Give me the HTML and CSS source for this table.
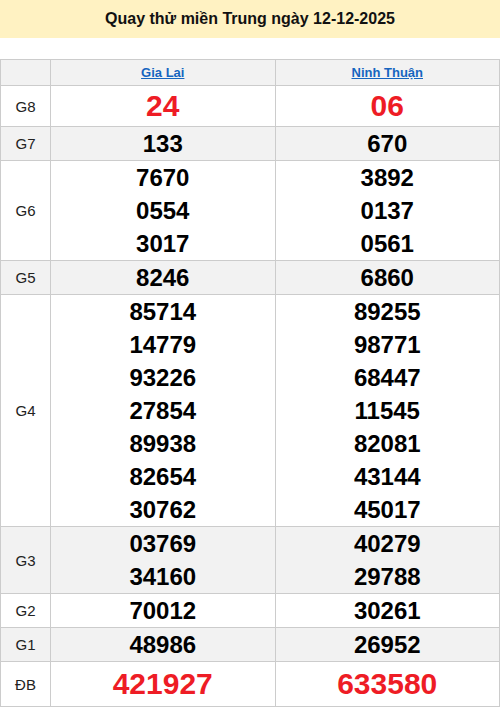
FILE: index.html
```html
<!DOCTYPE html>
<html lang="vi">
<head>
<meta charset="utf-8">
<title>Quay thử miền Trung</title>
<link rel="stylesheet" href="styles.css">
</head>
<body>
<div class="title">Quay thử miền Trung ngày 12-12-2025</div>
<table class="kq">
  <thead>
    <tr class="head">
      <th class="lbl"></th>
      <th><a href="#">Gia Lai</a></th>
      <th><a href="#">Ninh Thuận</a></th>
    </tr>
  </thead>
  <tbody>
    <tr class="g8"><td class="lbl">G8</td><td class="num big red">24</td><td class="num big red">06</td></tr>
    <tr class="alt"><td class="lbl">G7</td><td class="num">133</td><td class="num">670</td></tr>
    <tr><td class="lbl">G6</td><td class="num">7670<br>0554<br>3017</td><td class="num">3892<br>0137<br>0561</td></tr>
    <tr class="alt"><td class="lbl">G5</td><td class="num">8246</td><td class="num">6860</td></tr>
    <tr><td class="lbl">G4</td><td class="num">85714<br>14779<br>93226<br>27854<br>89938<br>82654<br>30762</td><td class="num">89255<br>98771<br>68447<br>11545<br>82081<br>43144<br>45017</td></tr>
    <tr class="alt"><td class="lbl">G3</td><td class="num">03769<br>34160</td><td class="num">40279<br>29788</td></tr>
    <tr><td class="lbl">G2</td><td class="num">70012</td><td class="num">30261</td></tr>
    <tr class="alt"><td class="lbl">G1</td><td class="num">48986</td><td class="num">26952</td></tr>
    <tr class="db"><td class="lbl">ĐB</td><td class="num big red">421927</td><td class="num big red">633580</td></tr>
  </tbody>
</table>
</body>
</html>
```
FILE: styles.css
```css
* { box-sizing: border-box; }
body {
  margin: 0;
  background: #fff;
  font-family: "Liberation Sans", Arial, sans-serif;
  color: #000;
}
.title {
  height: 38px;
  line-height: 38px;
  background: #fff2c2;
  text-align: center;
  font-weight: bold;
  font-size: 16px;
  color: #111;
  margin-bottom: 21px;
}
.kq {
  width: 500px;
  border-collapse: collapse;
  table-layout: fixed;
}
.kq th, .kq td {
  border: 1px solid #cccccc;
  padding: 0;
  text-align: center;
  vertical-align: middle;
}
.kq th.lbl, .kq td.lbl { width: 50px; }
.head th {
  background: #f2f2f2;
  height: 26px;
  line-height: 25px;
  font-size: 13px;
  font-weight: bold;
}
.head a {
  color: #1565c0;
  text-decoration: underline;
}
.lbl {
  font-size: 15px;
  color: #222;
}
.num {
  font-size: 24px;
  font-weight: bold;
  line-height: 33px;
  color: #000;
}
.alt td { background: #f2f2f2; }
.big { font-size: 30px; }
.g8 .num { line-height: 40px; }
.db .num { line-height: 44px; }
.red { color: #ee1c25; }
```
